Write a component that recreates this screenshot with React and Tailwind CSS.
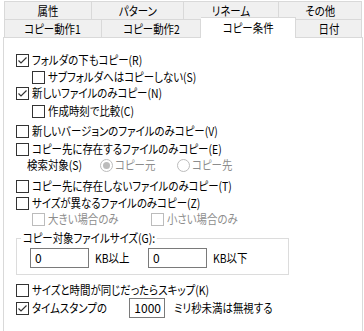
import React from 'react';

// splits "テキスト(X)" so the ASCII tail keeps its own spacing
const Label = ({ text }) => {
  const i = text.indexOf('(');
  if (i < 0) return text;
  return (
    <>
      {text.slice(0, i)}
      <span className="[font-feature-settings:normal]">{text.slice(i)}</span>
    </>
  );
};

// narrow text like the old UI gothic face
const T = ({ children, className = '' }) => (
  <span className={'inline-block origin-left scale-x-[0.87] whitespace-nowrap ' + className}>{children}</span>
);

const Check = ({ checked, disabled }) => (
  <span
    className={
      'flex h-[13px] w-[13px] shrink-0 items-center justify-center border bg-white ' +
      (disabled ? 'border-[#bcbcbc]' : 'border-[#333333]')
    }
  >
    {checked && (
      <svg width="11" height="11" viewBox="0 0 11 11">
        <polyline points="1.5,5.5 4,8 9.5,2.5" fill="none" stroke="#333333" strokeWidth="1.2" />
      </svg>
    )}
  </span>
);

const Radio = ({ checked }) => (
  <span className="flex h-[13px] w-[13px] shrink-0 items-center justify-center rounded-full border border-[#bcbcbc] bg-white">
    {checked && <span className="h-[7px] w-[7px] rounded-full bg-[#bcbcbc]" />}
  </span>
);

const CheckRow = ({ label, checked, indent, disabled, className = '' }) => (
  <div className={'flex h-[16px] items-center ' + (indent ? 'pl-[28px] ' : 'pl-[12px] ') + className}>
    <Check checked={checked} disabled={disabled} />
    <T className={'ml-[3px] ' + (disabled ? 'text-[#8d8d8d]' : 'text-black')}>
      <Label text={label} />
    </T>
  </div>
);

const Tab = ({ label, w }) => (
  <div
    className="flex h-full items-center justify-center border-r border-t border-[#d9d9d9] bg-[#f0f0f0] text-black"
    style={{ width: w }}
  >
    <span className="inline-block scale-x-[0.87] whitespace-nowrap">{label}</span>
  </div>
);

export default function App() {
  return (
    <div className="h-[331px] w-[364px] overflow-hidden bg-white font-['Noto_Sans_CJK_JP',sans-serif] text-[12px] leading-none [font-feature-settings:'palt']">
      {/* tab rows */}
      <div className="pl-[4px] pt-[1px]">
        <div className="flex h-[18px] w-[358px] border-l border-[#d9d9d9]">
          <Tab label="属性" w={87} />
          <Tab label="パターン" w={93} />
          <Tab label="リネーム" w={95} />
          <Tab label="その他" w={83} />
        </div>
        <div className="flex h-[18px] w-[358px] border-l border-[#d9d9d9]">
          <Tab label="コピー動作1" w={97} />
          <Tab label="コピー動作2" w={100} />
          <div className="relative z-10 -mt-[2px] flex h-[21px] w-[95px] items-center justify-center border-r border-t border-[#d9d9d9] bg-white pb-[1px]">
            <span className="inline-block scale-x-[0.87]">コピー条件</span>
          </div>
          <Tab label="日付" w={66} />
        </div>
      </div>

      {/* panel */}
      <div className="ml-[3px] h-[294px] w-[360px] border-l border-r border-t border-[#d9d9d9] bg-white pt-[14px]">
        <CheckRow label="フォルダの下もコピー(R)" checked />
        <CheckRow label="サブフォルダへはコピーしない(S)" indent className="mt-[1px]" />
        <CheckRow label="新しいファイルのみコピー(N)" checked />
        <CheckRow label="作成時刻で比較(C)" indent className="mt-[2px]" />
        <CheckRow label="新しいバージョンのファイルのみコピー(V)" className="mt-[4px]" />
        <CheckRow label="コピー先に存在するファイルのみコピー(E)" className="mt-[2px]" />

        <div className="flex h-[16px] items-center pl-[23px]">
          <div className="w-[73px]">
            <T>
              <Label text="検索対象(S)" />
            </T>
          </div>
          <Radio checked />
          <div className="ml-[2px] w-[62px]">
            <T className="text-[#8d8d8d]">コピー元</T>
          </div>
          <Radio />
          <T className="ml-[2px] text-[#8d8d8d]">コピー先</T>
        </div>

        <CheckRow label="コピー先に存在しないファイルのみコピー(T)" className="mt-[5px]" />
        <CheckRow label="サイズが異なるファイルのみコピー(Z)" className="mt-[1px]" />
        <div className="flex h-[16px] items-center pl-[28px]">
          <Check disabled />
          <div className="ml-[3px] w-[103px]">
            <T className="text-[#8d8d8d]">大きい場合のみ</T>
          </div>
          <Check disabled />
          <T className="ml-[3px] text-[#8d8d8d]">小さい場合のみ</T>
        </div>

        {/* size group */}
        <div className="relative ml-[12px] mt-[11px] h-[37px] w-[273px] border border-[#dcdcdc] pl-[13px] pt-[9px]">
          <span className="absolute -top-[7px] left-[4px] origin-left scale-x-[0.87] whitespace-nowrap bg-white px-[2px]">
            <Label text="コピー対象ファイルサイズ(G):" />
          </span>
          <div className="flex items-center">
            <div className="flex h-[20px] w-[59px] items-center border border-[#7a7a7a] pl-[4px]">0</div>
            <div className="ml-[6px] w-[53px]">
              <T>KB以上</T>
            </div>
            <div className="flex h-[20px] w-[59px] items-center border border-[#7a7a7a] pl-[4px]">0</div>
            <T className="ml-[6px]">KB以下</T>
          </div>
        </div>

        <CheckRow label="サイズと時間が同じだったらスキップ(K)" className="mt-[7px]" />
        <div className="flex h-[20px] items-center pl-[12px]">
          <Check checked />
          <div className="ml-[3px] w-[97px]">
            <T>タイムスタンプの</T>
          </div>
          <div className="flex h-[20px] w-[36px] items-center justify-end border border-[#7a7a7a] pr-[3px]">1000</div>
          <T className="ml-[9px]">ミリ秒未満は無視する</T>
        </div>
      </div>
    </div>
  );
}
